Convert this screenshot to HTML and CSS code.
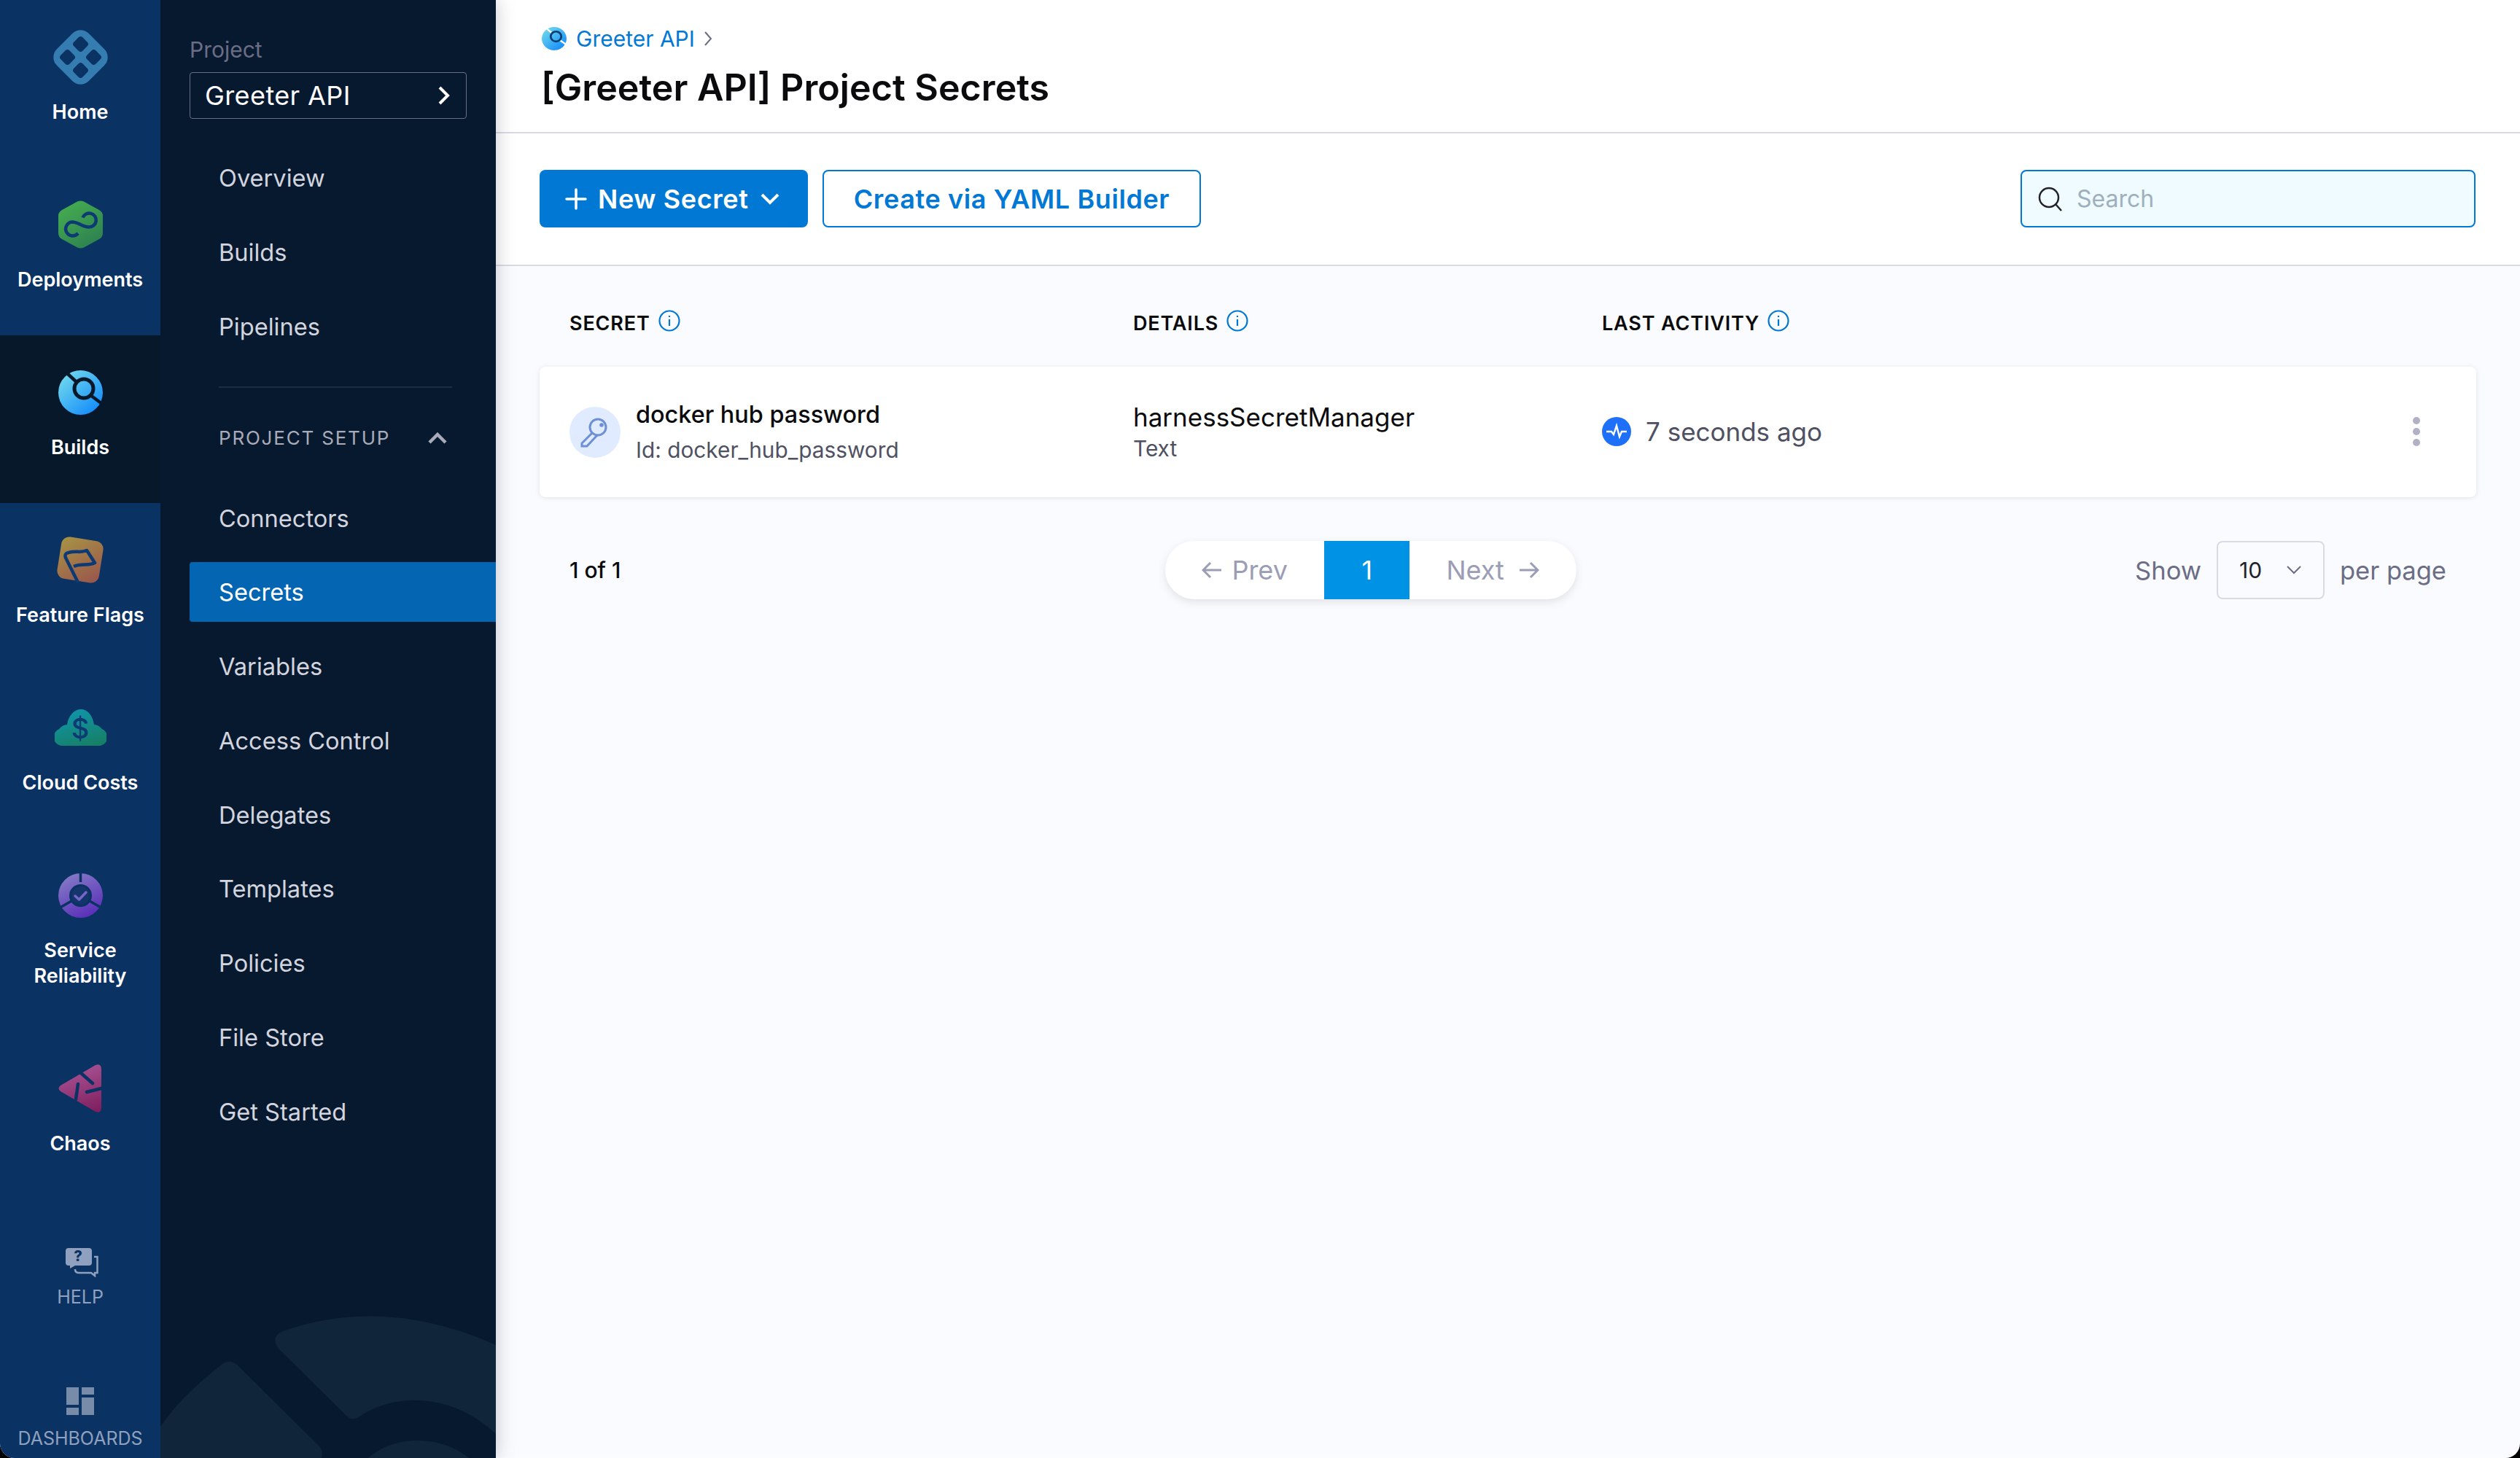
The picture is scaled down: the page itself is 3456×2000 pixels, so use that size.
FILE: index.html
```html
<!DOCTYPE html>
<html lang="en">
<head>
    <meta charset="UTF-8">
    <title>[Greeter API] Project Secrets</title>
    <link rel="stylesheet" href="styles.css">
</head>
<body>
<div class="shell">
    <!-- module rail -->
    <nav class="rail">
        <a class="rail-item">
            <span class="rail-icon">
                <svg width="75" height="75" viewBox="0 0 75 75">
                    <rect x="6.5" y="6.5" width="62" height="62" rx="16" fill="#357cb0" transform="rotate(45 37.5 37.5)"/>
                    <g fill="#0a3263">
                        <rect x="29" y="11" width="17" height="17" rx="4" transform="rotate(45 37.5 19.5)"/>
                        <rect x="29" y="47" width="17" height="17" rx="4" transform="rotate(45 37.5 55.5)"/>
                        <rect x="11" y="29" width="17" height="17" rx="4" transform="rotate(45 19.5 37.5)"/>
                        <rect x="47" y="29" width="17" height="17" rx="4" transform="rotate(45 55.5 37.5)"/>
                    </g>
                </svg>
            </span>
            <span class="rail-label">Home</span>
        </a>
        <a class="rail-item">
            <span class="rail-icon">
                <svg width="61" height="66" viewBox="0 0 61 66">
                    <defs><linearGradient id="gDeploy" x1="0.2" y1="0" x2="0.8" y2="1"><stop offset="0" stop-color="#46ad50"/><stop offset="1" stop-color="#2d7f50"/></linearGradient></defs>
                    <path d="M26 1.5 Q30.5 -0.5 35 1.5 L56 13 Q61 16 61 21 V45 Q61 50 56 53 L35 64.5 Q30.5 66.5 26 64.5 L5 53 Q0 50 0 45 V21 Q0 16 5 13 Z" fill="url(#gDeploy)"/>
                    <path d="M27 45 A9.5 9.5 0 1 1 19 29.5 C28 29.5 32 36.5 42 36.5 A9.5 9.5 0 1 0 33.5 23.5" fill="none" stroke="#0d3a75" stroke-width="4.5"/>
                </svg>
            </span>
            <span class="rail-label">Deployments</span>
        </a>
        <a class="rail-item active">
            <span class="rail-icon">
                <svg class="builds-logo" width="61" height="61" viewBox="0 0 61 61">
                    <defs><linearGradient id="gBuilds" x1="0.1" y1="0.1" x2="0.8" y2="0.9"><stop offset="0" stop-color="#70d8ec"/><stop offset="1" stop-color="#1890fa"/></linearGradient></defs>
                    <circle cx="30.5" cy="30.5" r="30.5" fill="url(#gBuilds)"/>
                    <path d="M13 5 L26 17 M44 34 L60 46" stroke="currentColor" stroke-width="4.5"/>
                    <circle cx="35" cy="25" r="13" fill="none" stroke="currentColor" stroke-width="5"/>
                </svg>
            </span>
            <span class="rail-label">Builds</span>
        </a>
        <a class="rail-item">
            <span class="rail-icon">
                <svg width="66" height="66" viewBox="0 0 66 66">
                    <defs><linearGradient id="gFlags" x1="0.1" y1="0" x2="0.9" y2="1"><stop offset="0" stop-color="#a79145"/><stop offset="1" stop-color="#9a574c"/></linearGradient></defs>
                    <rect x="4" y="4" width="58" height="58" rx="11" fill="url(#gFlags)" transform="rotate(9 33 33)"/>
                    <path d="M30 64 L13 30 Q11 24 17 23 C28 20 33 24 42 20 L53 37 C44 42 36 37 24 42" fill="none" stroke="#0d3a75" stroke-width="4.5" stroke-linejoin="round"/>
                </svg>
            </span>
            <span class="rail-label">Feature Flags</span>
        </a>
        <a class="rail-item">
            <span class="rail-icon">
                <svg width="71" height="50" viewBox="0 0 71 50">
                    <defs><linearGradient id="gCloud" x1="0.3" y1="0" x2="0.7" y2="1"><stop offset="0" stop-color="#0f96ab"/><stop offset="1" stop-color="#177f66"/></linearGradient></defs>
                    <path d="M12 50 A12 12 0 0 1 6 27 Q11 21 17 21 C19 8 27 0 36 0 C45 0 52 8 54 21 Q60 21 65 27 A12 12 0 0 1 59 50 Z" fill="url(#gCloud)"/>
                    <text class="cloud-sign" x="35" y="40" text-anchor="middle">$</text>
                </svg>
            </span>
            <span class="rail-label">Cloud Costs</span>
        </a>
        <a class="rail-item">
            <span class="rail-icon">
                <svg width="61" height="61" viewBox="0 0 61 61">
                    <defs><linearGradient id="gSrm" x1="0.2" y1="0" x2="0.7" y2="1"><stop offset="0" stop-color="#857dc6"/><stop offset="1" stop-color="#5a2db9"/></linearGradient></defs>
                    <circle cx="30.5" cy="30.5" r="30.5" fill="url(#gSrm)"/>
                    <path d="M30.5 0 V12 M4 46 L18 38 M57 46 L43 38" stroke="#0a3263" stroke-width="3.5"/>
                    <circle cx="30.5" cy="30.5" r="14" fill="#0a3263" fill-opacity="0.9" stroke="#0a3263" stroke-width="3"/>
                    <path d="M23 31 L28.5 36 L38 26" fill="none" stroke="#7667c6" stroke-width="3.5" stroke-linecap="round" stroke-linejoin="round"/>
                </svg>
            </span>
            <span class="rail-label">Service<br>Reliability</span>
        </a>
        <a class="rail-item">
            <span class="rail-icon">
                <svg width="60" height="66" viewBox="0 0 60 66">
                    <defs><linearGradient id="gChaos" x1="0.5" y1="0" x2="0.8" y2="1"><stop offset="0" stop-color="#a85394"/><stop offset="1" stop-color="#801f5f"/></linearGradient></defs>
                    <path d="M51 1 Q59 -2 59 7 V59 Q59 68 51 65 L3 37 Q-2 33 3 29 Z" fill="url(#gChaos)"/>
                    <path d="M31 12 L47 26 M27 27 L24 48 M39 38 L59 33" stroke="#0a3263" stroke-width="4.5" stroke-linecap="round"/>
                </svg>
            </span>
            <span class="rail-label">Chaos</span>
        </a>
        <div class="rail-foot">
            <a class="foot-link help-link">
                <svg width="45" height="40" viewBox="0 0 45 40">
                    <path d="M4 0 H32 Q36 0 36 4 V20 Q36 24 32 24 H13 L6 28 L6 24 H4 Q0 24 0 20 V4 Q0 0 4 0 Z" fill="#8fa1be"/>
                    <text class="help-sign" x="17" y="18" text-anchor="middle">?</text>
                    <path d="M39 12 H43.5 V34 H40 V38 L35 34 H18 Q13 34 13 29" fill="none" stroke="#8fa1be" stroke-width="2.5"/>
                </svg>
                <span>HELP</span>
            </a>
            <a class="foot-link">
                <svg width="38" height="38" viewBox="0 0 38 38" fill="#788ca9">
                    <rect width="17" height="24"/>
                    <rect x="21" width="17" height="10"/>
                    <rect y="28" width="17" height="10"/>
                    <rect x="21" y="14" width="17" height="24"/>
                </svg>
                <span>DASHBOARDS</span>
            </a>
        </div>
    </nav>

    <!-- project nav -->
    <aside class="panel">
        <svg class="panel-art" width="460" height="220" viewBox="0 0 460 220">
            <path d="M168 46 C270 10 370 25 460 65 V187 C400 130 320 130 272 164 Q262 170 254 161 L162 70 Q150 54 168 46 Z"/>
            <path d="M0 177 C25 140 55 115 85 91 Q95 84 105 92 L217 203 Q224 210 221 220 H0 Z"/>
            <path d="M285 220 C320 188 385 188 423 220 Z"/>
        </svg>
        <div class="project-label">Project</div>
        <div class="project-select">
            <span>Greeter API</span>
            <svg width="16" height="26" viewBox="0 0 16 26"><path d="M2 2 L13 13 L2 24" fill="none" stroke="#fff" stroke-width="4"/></svg>
        </div>
        <ul class="nav-list first">
            <li>Overview</li>
            <li>Builds</li>
            <li>Pipelines</li>
        </ul>
        <div class="nav-divider"></div>
        <div class="nav-section">
            <span>PROJECT SETUP</span>
            <svg width="26" height="16" viewBox="0 0 26 16"><path d="M2 14 L13 3 L24 14" fill="none" stroke="#a9abb8" stroke-width="4.5"/></svg>
        </div>
        <ul class="nav-list">
            <li>Connectors</li>
            <li class="active">Secrets</li>
            <li>Variables</li>
            <li>Access Control</li>
            <li>Delegates</li>
            <li>Templates</li>
            <li>Policies</li>
            <li>File Store</li>
            <li>Get Started</li>
        </ul>
    </aside>

    <main class="main">
        <header class="page-head">
            <div class="crumbs">
                <svg class="crumb-logo" width="34" height="32" viewBox="0 0 61 61" preserveAspectRatio="none">
                    <circle cx="30.5" cy="30.5" r="30.5" fill="url(#gBuilds)"/>
                    <path d="M13 5 L26 17 M44 34 L60 46" stroke="#fff" stroke-width="4.5"/>
                    <circle cx="35" cy="25" r="13" fill="none" stroke="#0b3f72" stroke-width="5"/>
                </svg>
                <a>Greeter API</a>
                <svg width="12" height="24" viewBox="0 0 12 24"><path d="M2 3 L10 12 L2 21" fill="none" stroke="#6b6d85" stroke-width="2"/></svg>
            </div>
            <h1>[Greeter API] Project Secrets</h1>
        </header>

        <div class="toolbar">
            <button class="btn btn-primary">
                <svg width="30" height="30" viewBox="0 0 30 30"><path d="M15 2 V28 M2 15 H28" stroke="#fff" stroke-width="3.5" stroke-linecap="round"/></svg>
                <span>New Secret</span>
                <svg class="btn-caret" width="28" height="18" viewBox="0 0 28 18"><path d="M3 3 L14 14 L25 3" fill="none" stroke="#fff" stroke-width="4"/></svg>
            </button>
            <button class="btn btn-outline">Create via YAML Builder</button>
            <div class="search">
                <svg width="34" height="34" viewBox="0 0 34 34"><circle cx="15" cy="15" r="13" fill="none" stroke="#22222a" stroke-width="2.5"/><path d="M24 24 L32 33" stroke="#22222a" stroke-width="2.5"/></svg>
                <span>Search</span>
            </div>
        </div>

        <section class="content">
            <div class="table-head">
                <div class="th">SECRET <svg class="info" width="30" height="30" viewBox="0 0 30 30"><circle cx="15" cy="15" r="13.5" fill="none" stroke="#0278d5" stroke-width="2.2"/><path d="M15 13 V22 M15 8 V10" stroke="#0278d5" stroke-width="2.2"/></svg></div>
                <div class="th">DETAILS <svg class="info" width="30" height="30" viewBox="0 0 30 30"><circle cx="15" cy="15" r="13.5" fill="none" stroke="#0278d5" stroke-width="2.2"/><path d="M15 13 V22 M15 8 V10" stroke="#0278d5" stroke-width="2.2"/></svg></div>
                <div class="th">LAST ACTIVITY <svg class="info" width="30" height="30" viewBox="0 0 30 30"><circle cx="15" cy="15" r="13.5" fill="none" stroke="#0278d5" stroke-width="2.2"/><path d="M15 13 V22 M15 8 V10" stroke="#0278d5" stroke-width="2.2"/></svg></div>
            </div>

            <div class="secret-row">
                <div class="secret-name">
                    <span class="key-badge">
                        <svg width="70" height="70" viewBox="0 0 70 70">
                            <circle cx="39" cy="28" r="11" fill="none" stroke="#6d8fd6" stroke-width="3"/>
                            <circle cx="44" cy="25" r="2.8" fill="#6d8fd6"/>
                            <path d="M31 36 L17 50 V54 H24 L38 39" fill="none" stroke="#6d8fd6" stroke-width="3"/>
                        </svg>
                    </span>
                    <div>
                        <div class="name">docker hub password</div>
                        <div class="sub">Id: docker_hub_password</div>
                    </div>
                </div>
                <div class="secret-details">
                    <div class="manager">harnessSecretManager</div>
                    <div class="sub">Text</div>
                </div>
                <div class="secret-activity">
                    <svg width="40" height="40" viewBox="0 0 40 40"><circle cx="20" cy="20" r="20" fill="#1f70f8"/><path d="M6 20 H13 L16 24 L20 12 L24 27 L27 20 H34" fill="none" stroke="#fff" stroke-width="2.4"/></svg>
                    <span>7 seconds ago</span>
                </div>
                <div class="row-menu"><i></i><i></i><i></i></div>
            </div>

            <div class="pagination">
                <div class="page-count">1 of 1</div>
                <div class="pager">
                    <span class="pager-btn prev">
                        <svg width="28" height="24" viewBox="0 0 28 24"><path d="M27 12 H3 M12 2 L2 12 L12 22" fill="none" stroke="#9b9db5" stroke-width="3"/></svg>
                        Prev
                    </span>
                    <span class="pager-num">1</span>
                    <span class="pager-btn next">
                        Next
                        <svg width="28" height="24" viewBox="0 0 28 24"><path d="M1 12 H25 M16 2 L26 12 L16 22" fill="none" stroke="#9b9db5" stroke-width="3"/></svg>
                    </span>
                </div>
                <div class="page-size">
                    <span>Show</span>
                    <div class="size-select">
                        <b>10</b>
                        <svg width="20" height="12" viewBox="0 0 20 12"><path d="M1 1 L10 10 L19 1" fill="none" stroke="#6b6d85" stroke-width="2"/></svg>
                    </div>
                    <span>per page</span>
                </div>
            </div>
        </section>
    </main>
</div>
</body>
</html>
```

FILE: styles.css
```css
* {
    box-sizing: border-box;
}
html, body {
    margin: 0;
    height: 2000px;
    background-color: #000;
    overflow: hidden;
}
body {
    font-family: Inter, "Noto Sans", sans-serif;
    color: #22222a;
}
a {
    display: block;
}
.shell {
    position: relative;
    display: flex;
    height: 2000px;
    border-radius: 0 0 20px 20px;
    overflow: hidden;
    background-color: #fafbfe;
}
/* thin window edge on the left and bottom */
.shell::after {
    content: "";
    position: absolute;
    inset: 0;
    border-left: 2px solid rgba(255, 255, 255, 0.2);
    border-bottom: 2px solid rgba(255, 255, 255, 0.22);
    border-radius: 0 0 20px 20px;
    pointer-events: none;
}

/* rail */
.rail {
    display: flex;
    flex-direction: column;
    flex: 0 0 220px;
    background-color: #0a3263;
    color: #fff;
    z-index: 2;
}
.rail-item {
    padding: 40px 0 60px;
    text-align: center;
}
.rail-item.active {
    background-color: #07182b;
    color: #07182b;
}
.rail-icon {
    display: flex;
    align-items: center;
    justify-content: center;
    height: 76px;
    margin-bottom: 19px;
}
.rail-label {
    display: block;
    position: relative;
    top: 1px;
    font-size: 27px;
    font-weight: 600;
    line-height: 35px;
    color: #fff;
}
.cloud-sign {
    font-family: Inter, sans-serif;
    font-size: 38px;
    font-weight: 500;
    fill: #0d3a75;
}
.help-sign {
    font-family: Inter, sans-serif;
    font-size: 20px;
    font-weight: 800;
    fill: #0a3263;
}
.rail-foot {
    margin-top: auto;
    padding-bottom: 12px;
    text-align: center;
    font-size: 25px;
    color: #8fa1be;
}
.foot-link svg {
    display: block;
    margin: 0 auto;
}
.foot-link span {
    display: block;
    line-height: 30px;
    margin-top: 17px;
}
.help-link {
    margin-bottom: 109px;
}
.help-link svg {
    transform: translateX(2px);
}
.help-link span {
    margin-top: 12px;
}

/* project nav */
.panel {
    position: relative;
    flex: 0 0 460px;
    padding: 47px 0 0 40px;
    background-color: #07192f;
    box-shadow: 0 0 24px rgba(30, 30, 60, 0.25);
    z-index: 1;
}
.panel-art {
    position: absolute;
    left: 0;
    bottom: 0;
    fill: #102539;
}
.project-label {
    font-size: 30px;
    line-height: 42px;
    color: #6b6d85;
}
.project-select {
    display: flex;
    align-items: center;
    justify-content: space-between;
    width: 380px;
    height: 64px;
    margin-top: 10px;
    padding: 0 22px 0 20px;
    border: 1.5px solid #6b6d85;
    border-radius: 4px;
    font-size: 36px;
    letter-spacing: 0.4px;
    color: #fff;
}
.nav-list {
    position: relative;
    display: flex;
    flex-direction: column;
    gap: 19.75px;
    margin: 0;
    padding: 0;
    list-style: none;
}
.nav-list.first {
    margin-top: 40px;
}
.nav-list li {
    height: 82px;
    padding-left: 40px;
    font-size: 32.6px;
    line-height: 82px;
    color: #d2d4de;
}
.nav-list li.active {
    background-color: #0466b3;
    border-radius: 4px 0 0 4px;
    color: #fff;
}
.nav-divider {
    width: 320px;
    height: 2px;
    margin: 41px 0 0 40px;
    background-color: #1c2e42;
}
.nav-section {
    display: flex;
    align-items: center;
    justify-content: space-between;
    width: 313px;
    height: 138px;
    margin-left: 40px;
    font-size: 26px;
    letter-spacing: 1.8px;
    color: #a9abb8;
}

/* main column */
.main {
    flex: 1;
    display: flex;
    flex-direction: column;
}
.page-head {
    height: 183px;
    padding: 37px 0 0 63px;
    background-color: #fff;
    border-bottom: 2px solid #d9dae5;
}
.crumbs {
    display: flex;
    align-items: center;
    height: 32px;
    font-size: 30px;
    color: #0278d5;
}
.crumbs a {
    margin: 0 12px 0 13px;
}
h1 {
    margin: 21px 0 0 -1px;
    font-size: 50.2px;
    font-weight: 600;
    line-height: 60px;
    color: #0b0b0d;
}
.toolbar {
    display: flex;
    align-items: flex-start;
    gap: 20px;
    height: 182px;
    padding: 50px 61px 0 60px;
    background-color: #fff;
    border-bottom: 2px solid #d9dae5;
}
.btn {
    display: flex;
    align-items: center;
    justify-content: center;
    height: 79px;
    border-radius: 8px;
    font-family: inherit;
    font-size: 36px;
    font-weight: 600;
    letter-spacing: 0.6px;
}
.btn-primary {
    justify-content: flex-start;
    gap: 15px;
    width: 368px;
    padding-left: 35px;
    border: none;
    background-color: #0278d5;
    color: #fff;
}
.btn-outline {
    width: 519px;
    border: 2px solid #0278d5;
    background-color: #fff;
    color: #0278d5;
}
.search {
    display: flex;
    align-items: center;
    gap: 19px;
    width: 624px;
    height: 79px;
    margin-left: auto;
    padding-left: 22px;
    border: 2.5px solid #0278d5;
    border-radius: 8px;
    background-color: #effbff;
    font-size: 32px;
    color: #9fb0bd;
}

/* table */
.content {
    flex: 1;
    padding: 58px 60px 0;
}
.table-head,
.secret-row {
    display: grid;
    grid-template-columns: 773px 643px 1fr;
    padding-left: 41px;
}
.table-head {
    height: 40px;
    margin-bottom: 40px;
}
.th {
    display: flex;
    align-items: center;
    gap: 11px;
    font-size: 27px;
    font-weight: 600;
    letter-spacing: 0.85px;
    color: #0b0b0d;
}
.info {
    margin-top: -6px;
}
.secret-row {
    position: relative;
    align-items: center;
    height: 179px;
    background-color: #fff;
    border-radius: 8px;
    box-shadow: 0 1px 6px rgba(96, 97, 112, 0.16);
}
.secret-name {
    display: flex;
    align-items: center;
    gap: 21px;
}
.key-badge {
    flex: none;
    width: 70px;
    height: 70px;
    border-radius: 50%;
    background-color: #e0ebff;
}
.key-badge svg {
    display: block;
}
.name {
    font-size: 32.4px;
    font-weight: 500;
    line-height: 42px;
    color: #0b0b0d;
}
.sub {
    margin-top: 6px;
    font-size: 29.8px;
    line-height: 42px;
    color: #4f5162;
}
.manager {
    font-size: 35px;
    line-height: 44px;
    color: #0b0b0d;
}
.secret-details .sub {
    margin-top: 0;
}
.secret-activity {
    display: flex;
    align-items: center;
    gap: 20px;
    margin-top: -2px;
    font-size: 35px;
    color: #4f5162;
}
.row-menu {
    position: absolute;
    top: 69px;
    right: 77px;
    display: flex;
    flex-direction: column;
    gap: 5px;
}
.row-menu i {
    width: 10px;
    height: 10px;
    border-radius: 50%;
    background-color: #b0b1c4;
}

/* pagination */
.pagination {
    display: flex;
    align-items: center;
    height: 80px;
    margin-top: 60px;
    padding: 0 41px;
}
.page-count {
    margin-top: -1px;
    font-size: 30px;
    font-weight: 500;
    color: #0b0b0d;
}
.pager {
    display: flex;
    width: 564px;
    height: 80px;
    margin-left: 747px;
    overflow: hidden;
    border-radius: 40px;
    background-color: #fff;
    box-shadow: 0 4px 12px rgba(96, 97, 112, 0.16);
    font-size: 36px;
    color: #9b9db5;
}
.pager-btn {
    display: flex;
    align-items: center;
    gap: 13px;
}
.prev {
    width: 218px;
    padding-left: 50px;
}
.next {
    gap: 20px;
    padding-left: 50px;
}
.pager-num {
    width: 117px;
    line-height: 80px;
    text-align: center;
    background-color: #0092e4;
    color: #fff;
}
.page-size {
    display: flex;
    align-items: center;
    gap: 21px;
    margin-left: auto;
    font-size: 34.5px;
    color: #6b6d85;
}
.size-select {
    display: flex;
    align-items: center;
    gap: 34px;
    width: 148px;
    height: 80px;
    padding-left: 29px;
    border: 2px solid #d9dae5;
    border-radius: 8px;
}
.size-select b {
    font-size: 30px;
    font-weight: 400;
    color: #22222a;
}
```
